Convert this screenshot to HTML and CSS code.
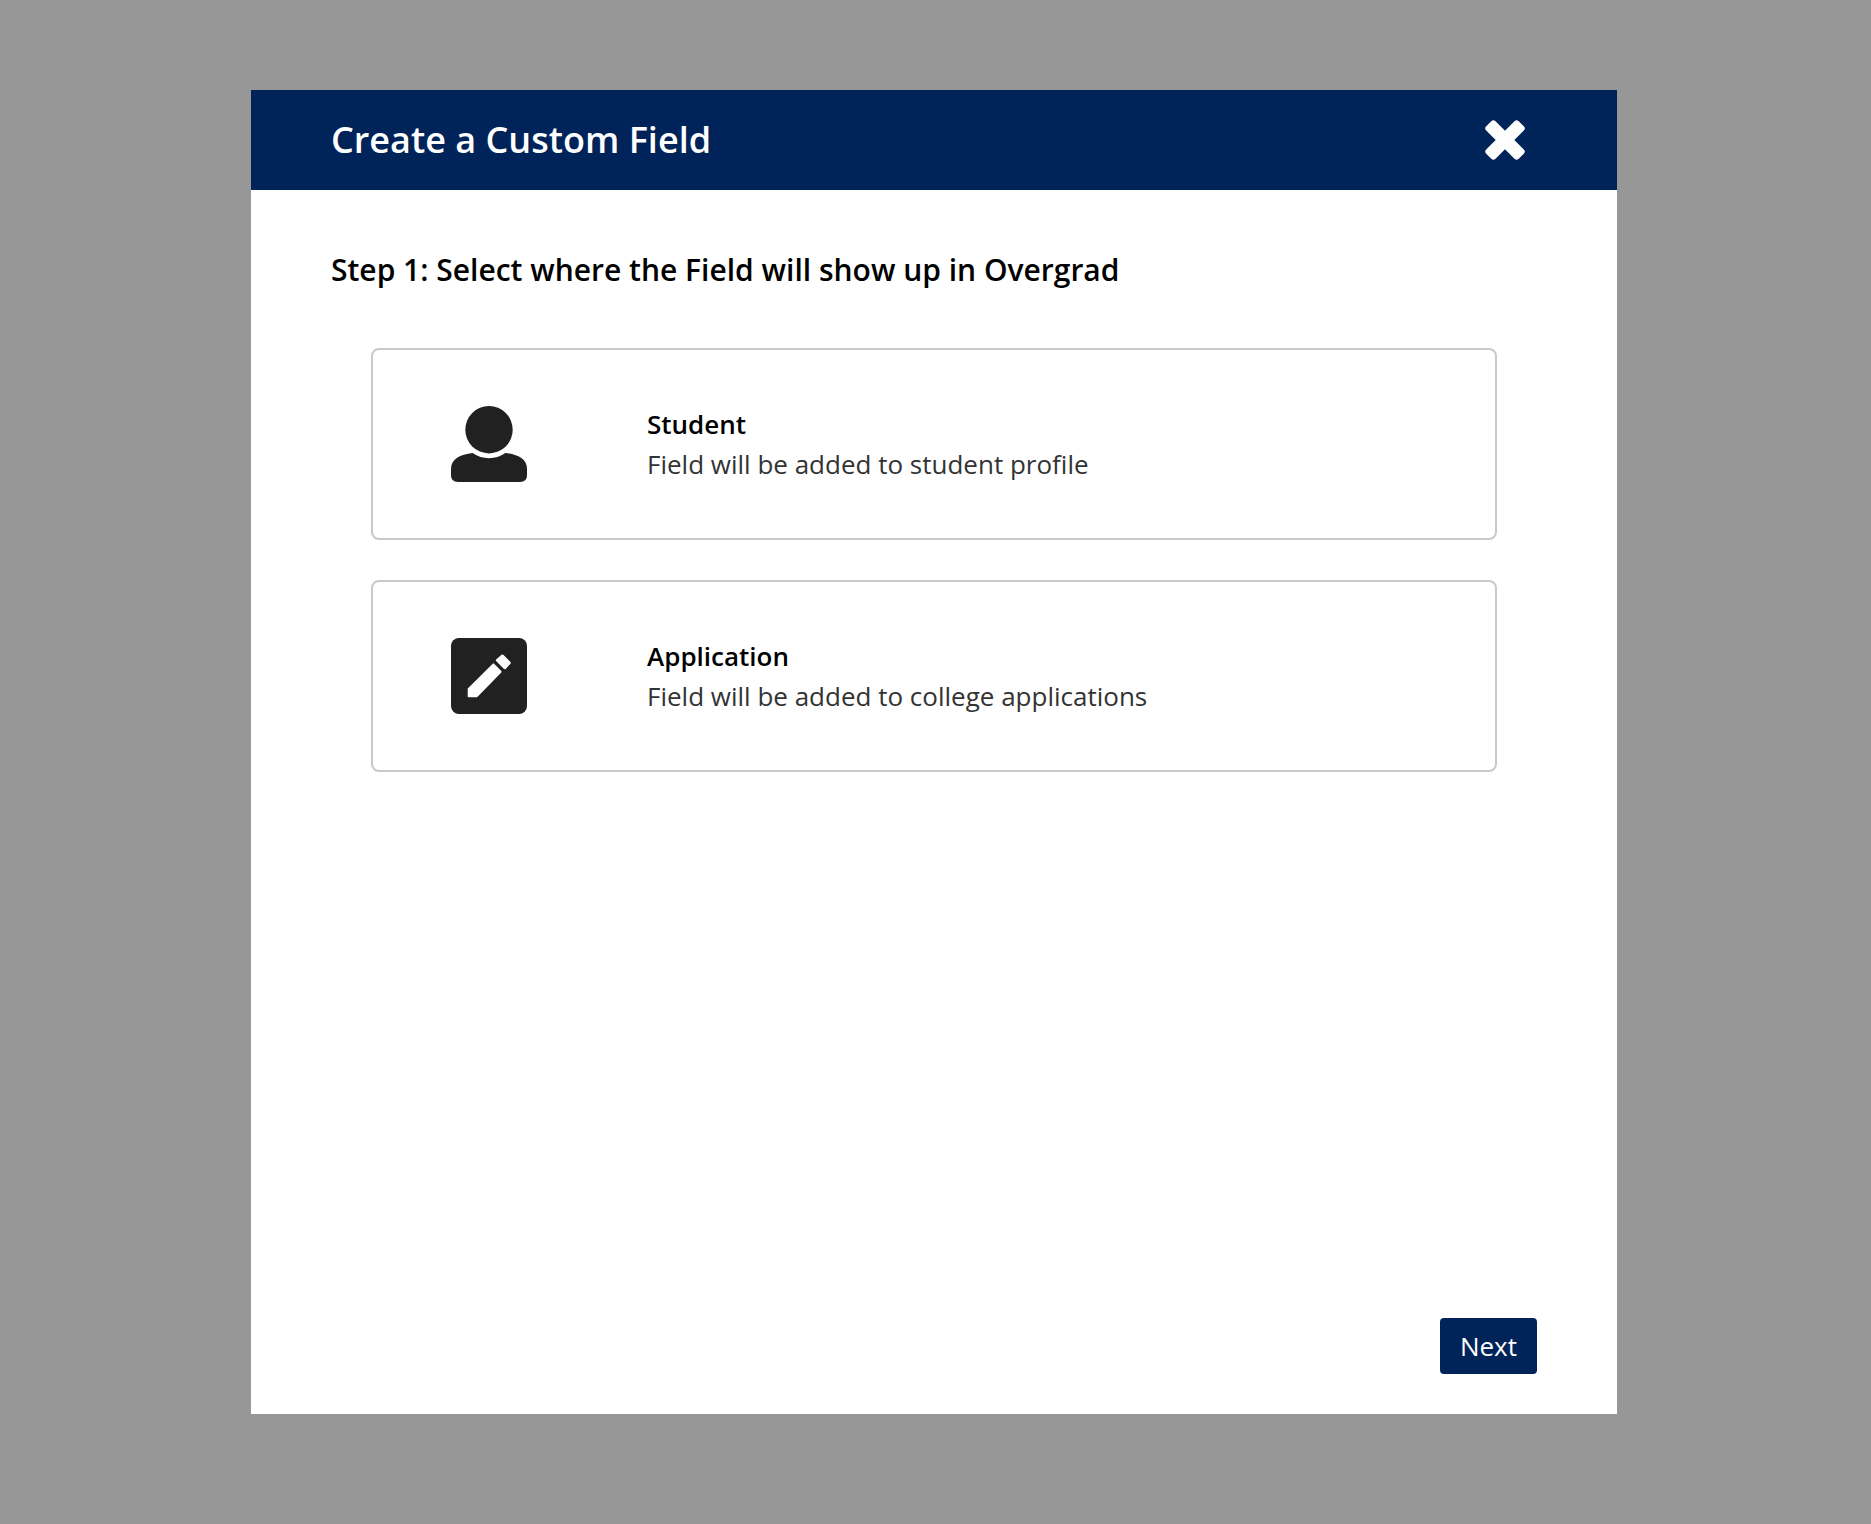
FILE: index.html
```html
<!DOCTYPE html>
<html lang="en">
<head>
<meta charset="utf-8">
<meta name="viewport" content="width=device-width, initial-scale=1">
<title>Create a Custom Field</title>
<link rel="stylesheet" href="styles.css">
</head>
<body>
<main class="modal" role="dialog" aria-labelledby="modal-title">
  <header class="modal-header">
    <h1 class="modal-title" id="modal-title">Create a Custom Field</h1>
    <button class="close" type="button" aria-label="Close">
      <svg class="close-icon" viewBox="0 0 40 40" aria-hidden="true">
        <g fill="currentColor">
          <rect x="-3" y="13.4" width="46" height="13.2" rx="3" transform="rotate(45 20 20)"/>
          <rect x="-3" y="13.4" width="46" height="13.2" rx="3" transform="rotate(-45 20 20)"/>
        </g>
      </svg>
    </button>
  </header>
  <section class="modal-body">
    <h2 class="step">Step 1: Select where the Field will show up in Overgrad</h2>
    <div class="options">
      <button class="option" type="button">
        <svg class="option-icon" viewBox="0 0 76 76" aria-hidden="true">
          <g fill="currentColor">
            <circle cx="38" cy="23.7" r="23.7"/>
            <path d="M21.700 47C9 48.500 0 53 0 63v6.500Q0 76 7 76h62q7 0 7-6.500V63c0-10-9-14.500-21.700-16a28.200 28.200 0 0 1-32.600 0z"/>
          </g>
        </svg>
        <span class="option-text">
          <span class="option-name">Student</span>
          <span class="option-note">Field will be added to student profile</span>
        </span>
      </button>
      <button class="option" type="button">
        <svg class="option-icon" viewBox="0 0 76 76" aria-hidden="true">
          <rect width="76" height="76" rx="8" fill="currentColor"/>
          <g fill="#fff" stroke="#fff" stroke-width="2" stroke-linejoin="round">
            <path d="M17.700 51 42.400 26.400 49.600 33.800 25.600 58.300H17.700z"/>
            <path d="M51.500 18 58.200 24.900 53.800 29.700 46.400 22.300z" stroke-width="3"/>
          </g>
        </svg>
        <span class="option-text">
          <span class="option-name">Application</span>
          <span class="option-note">Field will be added to college applications</span>
        </span>
      </button>
    </div>
  </section>
  <footer class="modal-footer">
    <button class="next" type="button">Next</button>
  </footer>
</main>
</body>
</html>
```
FILE: styles.css
```css
* {
  box-sizing: border-box;
}

body {
  margin: 0;
  padding: 90px 254px 110px 251px;
  background: #979797;
  color: #000;
  font-family: "Open Sans", "Noto Sans", sans-serif;
}

button {
  font: inherit;
  cursor: pointer;
}

.modal {
  display: flex;
  flex-direction: column;
  min-height: calc(100vh - 200px);
  background: #fff;
}

.modal-header {
  display: flex;
  align-items: center;
  justify-content: space-between;
  min-height: 100px;
  padding: 0 80px;
  background: #002359;
  color: #fff;
}

.modal-title {
  margin: 0;
  font-size: 36px;
  font-weight: 600;
  line-height: 48px;
}

.close {
  display: flex;
  padding: 12px;
  border: 0;
  background: none;
  color: inherit;
}

.close-icon {
  width: 40px;
  height: 40px;
}

.modal-body {
  flex: 1;
  padding: 60px 80px;
}

.step {
  margin: 0;
  font-size: 30px;
  font-weight: 600;
  line-height: 40px;
}

.options {
  display: flex;
  flex-direction: column;
  gap: 40px;
  padding: 58px 40px 0;
}

.option {
  display: flex;
  align-items: center;
  gap: 120px;
  min-height: 192px;
  padding: 40px 78px;
  border: 2px solid #c9c9c9;
  border-radius: 8px;
  background: #fff;
  color: #212121;
  text-align: left;
}

.option-icon {
  flex: none;
  width: 76px;
  height: 76px;
}

.option-text {
  display: flex;
  flex-direction: column;
  font-size: 26px;
  line-height: 40px;
}

.option-name {
  color: #000;
  font-weight: 600;
}

.option-note {
  color: #333;
}

.modal-footer {
  display: flex;
  justify-content: flex-end;
  padding: 0 80px 40px;
}

.next {
  padding: 8px 20px;
  border: 0;
  border-radius: 4px;
  background: #002359;
  color: #fff;
  font-size: 26px;
  line-height: 40px;
}
```
